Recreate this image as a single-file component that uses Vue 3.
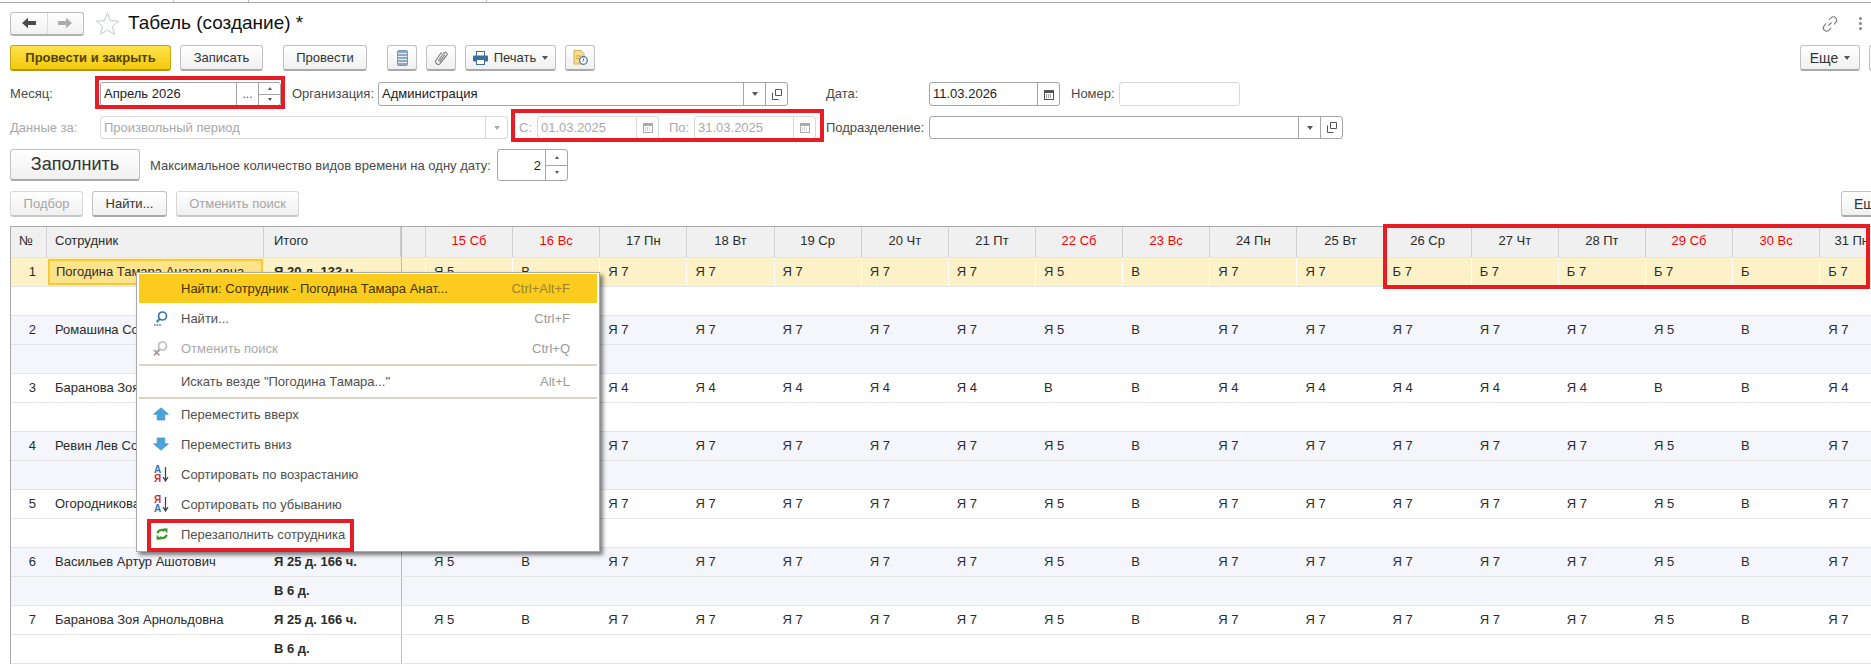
<script setup>
const days = ['15 Сб','16 Вс','17 Пн','18 Вт','19 Ср','20 Чт','21 Пт','22 Сб','23 Вс','24 Пн','25 Вт','26 Ср','27 Чт','28 Пт','29 Сб','30 Вс','31 Пн']
const std = ['Я 5','В','Я 7','Я 7','Я 7','Я 7','Я 7','Я 5','В','Я 7','Я 7','Я 7','Я 7','Я 7','Я 5','В','Я 7']
const hid = ['','',...std.slice(2)]
const rows = [
  {n:1,name:'Погодина Тамара Анатольевна',t1:'Я 20 д. 133 ч.',t2:'',cells:['Я 5','В','Я 7','Я 7','Я 7','Я 7','Я 7','Я 5','В','Я 7','Я 7','Б 7','Б 7','Б 7','Б 7','Б','Б 7']},
  {n:2,name:'Ромашина Со',t1:'',t2:'',cells:hid},
  {n:3,name:'Баранова Зоя',t1:'',t2:'',cells:['','','Я 4','Я 4','Я 4','Я 4','Я 4','В','В','Я 4','Я 4','Я 4','Я 4','Я 4','В','В','Я 4']},
  {n:4,name:'Ревин Лев Со',t1:'',t2:'',cells:hid},
  {n:5,name:'Огородникова',t1:'',t2:'',cells:hid},
  {n:6,name:'Васильев Артур Ашотович',t1:'Я 25 д. 166 ч.',t2:'В 6 д.',cells:std},
  {n:7,name:'Баранова Зоя Арнольдовна',t1:'Я 25 д. 166 ч.',t2:'В 6 д.',cells:std},
]
const isRed = d => /Сб|Вс/.test(d)
</script>

<template>
  <div class="page">
    <div class="topline"><i class="tick t1"></i><i class="tick t2"></i><i class="tick t3"></i></div>
    <div class="titlebar">
      <div class="nav">
        <span class="navb"><svg width="16" height="12" viewBox="0 0 16 12"><path d="M1 6 7 .8V4H15V8H7V11.2Z" fill="#4a4a4a"/></svg></span>
        <span class="navb"><svg width="16" height="12" viewBox="0 0 16 12"><path d="M15 6 9 .8V4H1V8H9V11.2Z" fill="#ababab"/></svg></span>
      </div>
      <svg class="star" width="25" height="25" viewBox="0 0 25 25"><path d="M12.5 2 15.5 9.6 23.6 10.2 17.4 15.4 19.4 23.3 12.5 19 5.6 23.3 7.6 15.4 1.4 10.2 9.5 9.6Z" fill="#fff" stroke="#c4c8cc"/></svg>
      <span class="title">Табель (создание) *</span>
      <svg class="link" width="18" height="18" viewBox="0 0 18 18" fill="none" stroke="#777" stroke-width="1.1"><path d="M7.5 10.5 10.5 7.5M8 5l2-2.2a3 3 0 0 1 4.6 0 3.2 3.2 0 0 1 .3 4.4L13 9.5M10 13l-2 2.2a3 3 0 0 1-4.6 0 3.2 3.2 0 0 1-.3-4.4L5 8.5"/></svg>
      <span class="dots"><i></i><i></i><i></i></span>
    </div>

    <div class="toolbar">
      <button class="btn primary w161">Провести и закрыть</button>
      <button class="btn w83">Записать</button>
      <button class="btn w84 ml11">Провести</button>
      <button class="btn ic ml11"><svg width="11" height="16" viewBox="0 0 11 16"><rect x=".5" y=".5" width="10" height="15" rx="1" fill="#8fa9c4" stroke="#7d98b5"/><path d="M1 3.5h9M1 6.5h9M1 9.5h9M1 12.5h9" stroke="#e6edf4"/></svg></button>
      <button class="btn ic"><svg width="14" height="14" viewBox="0 0 14 14" fill="none" stroke="#7c7c7c" stroke-width="1.1"><path d="M4.2 10 9.6 2.2a1.9 1.9 0 0 1 3.1 2.2L6.4 12.2A2.7 2.7 0 0 1 2 9L7.6 1.4M5.5 11l5.4-7.4"/></svg></button>
      <button class="btn w91">
        <svg width="15" height="14" viewBox="0 0 15 14"><rect x="3.5" y=".5" width="8" height="5" fill="#fff" stroke="#3f6f98"/><rect x="0" y="4.5" width="15" height="6" rx="1" fill="#3f6f98"/><rect x="3.5" y="8.5" width="8" height="5" fill="#fff" stroke="#3f6f98"/></svg>
        <span>Печать</span><i class="caret"></i>
      </button>
      <button class="btn ic"><svg width="15" height="15" viewBox="0 0 15 15"><path d="M1 .5h7l3 3V14H1Z" fill="#f5dc8e" stroke="#cfae55"/><path d="M3 6h5M3 8.5h4" stroke="#c9a348"/><circle cx="10.5" cy="10.5" r="3.8" fill="#fff" stroke="#3c6ea8" stroke-width="1.2"/><path d="M10.5 8.5v2l-1.2 1" stroke="#d33" fill="none"/></svg></button>
      <span class="spacer"></span>
      <button class="btn w60 eshe">Еще<i class="caret"></i></button>
      <button class="btn clipb"></button>
    </div>

    <div class="frow r1">
      <span class="lbl w90">Месяц:</span>
      <div class="field w181">
        <span class="val">Апрель 2026</span>
        <span class="cell w21 muted">...</span>
        <span class="spin"><i class="up"></i><i class="down"></i></span>
      </div>
      <span class="lbl w86 ml11">Организация:</span>
      <div class="field w410">
        <span class="val">Администрация</span>
        <span class="cell w21"><i class="caret"></i></span>
        <span class="cell w21"><svg width="10" height="11" viewBox="0 0 10 11" fill="none" stroke="#555"><path d="M3.5.5h6v6h-6zM.5 3.5v7h6"/></svg></span>
      </div>
      <span class="lbl w142 ml39">Дата:</span>
      <div class="field w131">
        <span class="val">11.03.2026</span>
        <span class="cell w21"><svg width="10" height="11" viewBox="0 0 10 11"><rect x=".5" y="1.5" width="9" height="9" fill="#fff" stroke="#555"/><rect x="1" y="1" width="8" height="3" fill="#555"/><path d="M2 6h6M2 8h6" stroke="#555" stroke-dasharray="1 1"/></svg></span>
      </div>
      <span class="lbl ml11 w48">Номер:</span>
      <div class="field w121 light"></div>
    </div>

    <div class="frow r2">
      <span class="lbl w90 dis">Данные за:</span>
      <div class="field w408 light">
        <span class="val dis">Произвольный период</span>
        <span class="cell w21 lightc"><i class="caret lightcaret"></i></span>
      </div>
      <span class="lbl dis ml11 w18">С:</span>
      <div class="field w122 light">
        <span class="val dis">01.03.2025</span>
        <span class="cell w21 lightc"><svg width="10" height="11" viewBox="0 0 10 11"><rect x=".5" y="1.5" width="9" height="9" fill="#fff" stroke="#aaa"/><rect x="1" y="1" width="8" height="3" fill="#aaa"/><path d="M2 6h6M2 8h6" stroke="#aaa" stroke-dasharray="1 1"/></svg></span>
      </div>
      <span class="lbl dis ml10 w25">По:</span>
      <div class="field w122 light">
        <span class="val dis">31.03.2025</span>
        <span class="cell w21 lightc"><svg width="10" height="11" viewBox="0 0 10 11"><rect x=".5" y="1.5" width="9" height="9" fill="#fff" stroke="#aaa"/><rect x="1" y="1" width="8" height="3" fill="#aaa"/><path d="M2 6h6M2 8h6" stroke="#aaa" stroke-dasharray="1 1"/></svg></span>
      </div>
      <span class="lbl ml10 w103">Подразделение:</span>
      <div class="field w414">
        <span class="val"></span>
        <span class="cell w21"><i class="caret"></i></span>
        <span class="cell w21"><svg width="10" height="11" viewBox="0 0 10 11" fill="none" stroke="#555"><path d="M3.5.5h6v6h-6zM.5 3.5v7h6"/></svg></span>
      </div>
    </div>

    <div class="frow r3">
      <button class="btn big">Заполнить</button>
      <span class="lbl ml10 w347">Максимальное количество видов времени на одну дату:</span>
      <div class="field w71">
        <span class="val right">2</span>
        <span class="spin"><i class="up"></i><i class="down"></i></span>
      </div>
    </div>

    <div class="frow r4">
      <button class="btn dbtn w73">Подбор</button>
      <button class="btn w75">Найти...</button>
      <button class="btn dbtn w123">Отменить поиск</button>
      <span class="spacer"></span>
      <button class="btn clipr">Еще</button>
    </div>

    <div class="tablewrap">
      <div class="thead">
        <div class="c cn">№</div>
        <div class="c cname">Сотрудник</div>
        <div class="c ctot">Итого</div>
        <div class="c cblank"></div>
        <div v-for="d in days" :key="d" class="c cday center" :class="{red:isRed(d)}">{{ d }}</div>
      </div>
      <div v-for="r in rows" :key="r.n" class="tr" :class="{sel:r.n===1, even:r.n%2===0}">
        <div class="line l1">
          <div class="c cn num">{{ r.n }}</div>
          <div class="c cname"><span class="nm" :class="{focus:r.n===1}">{{ r.name }}</span></div>
          <div class="c ctot b">{{ r.t1 }}</div>
          <div class="c cblank"></div>
          <div v-for="(v,i) in r.cells" :key="i" class="c cday">{{ v }}</div>
        </div>
        <div class="line l2">
          <div class="c cn"></div>
          <div class="c cname"></div>
          <div class="c ctot b">{{ r.t2 }}</div>
          <div class="c cblank"></div>
          <div class="c crest"></div>
        </div>
      </div>
    </div>

    <div class="menu">
      <div class="mi hi"><span class="mt">Найти: Сотрудник - Погодина Тамара Анат...</span><span class="ms">Ctrl+Alt+F</span></div>
      <div class="mi">
        <svg class="mic" width="16" height="16" viewBox="0 0 16 16" fill="none"><circle cx="9.5" cy="6" r="4" stroke="#3a7aa8" stroke-width="1.7"/><path d="M6.6 9 3.6 12" stroke="#3a7aa8" stroke-width="2"/><path d="M1 15h1.6M3.6 15h1.6M6.2 15h1.6" stroke="#3a7aa8" stroke-width="1.4"/></svg>
        <span class="mt">Найти...</span><span class="ms">Ctrl+F</span></div>
      <div class="mi dism">
        <svg class="mic" width="16" height="16" viewBox="0 0 16 16" fill="none"><circle cx="9.5" cy="6" r="4" stroke="#bdbdbd" stroke-width="1.7"/><path d="M6.6 9 3.6 12" stroke="#bdbdbd" stroke-width="2"/><path d="M1 10l5.4 5.4M6.4 10 1 15.4" stroke="#b48f8f" stroke-width="1.7"/></svg>
        <span class="mt">Отменить поиск</span><span class="ms">Ctrl+Q</span></div>
      <div class="sep"></div>
      <div class="mi"><span class="mt">Искать везде "Погодина Тамара..."</span><span class="ms">Alt+L</span></div>
      <div class="sep"></div>
      <div class="mi">
        <svg class="mic" width="16" height="14" viewBox="0 0 16 14"><path d="M8 .8 15.4 7.2H11.8V13H4.2V7.2H.6Z" fill="#4aa3dc" stroke="#3a90c8" stroke-width=".7" stroke-linejoin="round"/></svg>
        <span class="mt">Переместить вверх</span></div>
      <div class="mi">
        <svg class="mic" width="16" height="14" viewBox="0 0 16 14"><path d="M8 13.2 15.4 6.8H11.8V1H4.2V6.8H.6Z" fill="#4aa3dc" stroke="#3a90c8" stroke-width=".7" stroke-linejoin="round"/></svg>
        <span class="mt">Переместить вниз</span></div>
      <div class="mi">
        <span class="mic sorti"><span class="az"><em class="blue">А</em><em class="redt">Я</em></span><svg width="7" height="15" viewBox="0 0 7 15"><path d="M3.5 0V13M1 10 3.5 14 6 10" stroke="#444" stroke-width="1.3" fill="none"/></svg></span>
        <span class="mt">Сортировать по возрастанию</span></div>
      <div class="mi">
        <span class="mic sorti"><span class="az"><em class="redt">Я</em><em class="blue">А</em></span><svg width="7" height="15" viewBox="0 0 7 15"><path d="M3.5 0V13M1 10 3.5 14 6 10" stroke="#444" stroke-width="1.3" fill="none"/></svg></span>
        <span class="mt">Сортировать по убыванию</span></div>
      <div class="mi">
        <svg class="mic refill" width="12" height="12" viewBox="0 0 12 12" fill="none" stroke="#3c9a2a" stroke-width="2.4"><path d="M1.4 5.2A4.4 4.4 0 0 1 8.6 3"/><path d="M10.6 6.8A4.4 4.4 0 0 1 3.4 9"/><path d="M7 .2 11.6 .6 11.2 5.4Z" fill="#3c9a2a" stroke="none"/><path d="M5 11.8 .4 11.4 .8 6.6Z" fill="#3c9a2a" stroke="none"/></svg>
        <span class="mt">Перезаполнить сотрудника</span></div>
    </div>

    <div class="rbox b1"></div>
    <div class="rbox b2"></div>
    <div class="rbox b3"></div>
    <div class="rbox b4"></div>
  </div>
</template>

<style>
html,body{margin:0;background:#fff;overflow:hidden}
</style>
<style scoped>
.page{position:relative;width:1871px;height:666px;overflow:hidden;background:#fff;font:13px "Liberation Sans",Arial,sans-serif;color:#2b2b2b}
.topline{position:relative;height:3px;box-sizing:border-box;border-bottom:1px solid #a8a8a8}
.tick{position:absolute;top:0;width:1px;height:2px;background:#bbb}
.t1{left:173px}.t2{left:248px}.t3{left:486px}
.titlebar{display:flex;align-items:center;height:23px;padding:9px 0 0 10px}
.nav{display:flex;flex:none;width:74px;height:24px;box-sizing:border-box;border:1px solid #bcbcbc;border-bottom:2px solid #b0b0b0;border-radius:3px;background:linear-gradient(#fff,#f1f1f1)}
.navb{flex:1;display:flex;align-items:center;justify-content:center}
.navb+.navb{border-left:1px solid #ddd}
.star{margin-left:11px}
.title{margin-left:8px;font-size:19px;color:#111;padding-bottom:2px}
.link{margin-left:auto;margin-right:20px}
.dots{display:flex;flex-direction:column;gap:2px;margin-right:9px}
.dots i{width:3px;height:3px;background:#888;border-radius:50%}
.toolbar{display:flex;align-items:center;gap:9px;margin-top:10px;height:26px;padding-left:10px}
.btn{box-sizing:border-box;height:26px;padding:0;border:1px solid #c2c2c2;border-bottom:2px solid #a9a9a9;border-radius:3px;background:linear-gradient(#fff,#f0f0f0);font:13px "Liberation Sans",Arial,sans-serif;color:#333;display:inline-flex;align-items:center;justify-content:center;gap:6px;flex:none}
.primary{background:linear-gradient(#ffe34d,#f4c90a);border-color:#c7a80f;border-bottom-color:#b4960c;font-weight:700;color:#4f4300}
.w161{width:161px}.w83{width:83px}.w84{width:84px}.w91{width:91px}.w60{width:60px}
.w73{width:73px}.w75{width:75px}.w123{width:123px}
.ic{width:30px}
.ml11{margin-left:11px}
.spacer{flex:1}
.eshe{font-size:14px}
.clipb{width:20px;margin-right:-18px}
.caret{display:inline-block;width:0;height:0;border:3px solid transparent;border-top:4px solid #555;border-bottom:0}
.lightcaret{border-top-color:#aaa}
.frow{display:flex;align-items:center;padding-left:10px}
.r1{margin-top:11px;height:24px}
.r1 .lbl{padding-bottom:2px}
.r2{margin-top:10px;height:23px}
.r3{margin-top:10px;height:32px}
.r4{margin-top:10px;height:26px;gap:9px}
.lbl{flex:none;color:#4a4a4a;white-space:nowrap}
.dis{color:#a9a9a9}
.w90{width:90px}.w86{width:86px}.w142{width:103px}.w48{width:48px}.w18{width:18px}.w25{width:25px}.w103{width:103px}.w347{width:347px}
.ml39{margin-left:38px}.ml10{margin-left:10px}
.field{display:flex;flex:none;box-sizing:border-box;height:100%;border:1px solid #a5a5a5;border-radius:3px;background:#fff;align-items:stretch;color:#222}
.light{border-color:#d8d8d8}
.w181{width:181px}.w410{width:410px}.w131{width:131px}.w121{width:121px}.w408{width:408px}.w122{width:122px}.w414{width:414px}.w71{width:71px}
.val{flex:1;padding-left:3px;display:flex;align-items:center;white-space:nowrap;min-width:0}
.r1 .val{padding-bottom:1px}
.val.right{justify-content:flex-end;padding-right:4px}
.cell{flex:none;width:21px;border-left:1px solid #a5a5a5;display:flex;align-items:center;justify-content:center}
.lightc{border-left-color:#d8d8d8}
.muted{color:#555;font-size:12px}
.spin{flex:none;width:21px;border-left:1px solid #a5a5a5;display:flex;flex-direction:column}
.spin i{flex:1;display:flex;align-items:center;justify-content:center}
.spin .down{border-top:1px solid #a5a5a5}
.spin i::after{content:"";width:0;height:0;border:2px solid transparent}
.spin .up::after{border-bottom:3px solid #555;border-top:0}
.spin .down::after{border-top:3px solid #555;border-bottom:0}
.big{width:130px;height:32px;font-size:18px}
.dbtn{color:#a5a5a5;border-color:#d8d8d8;border-bottom-color:#c8c8c8}
.clipr{width:60px;margin-right:-30px;justify-content:flex-start;padding-left:12px;font-size:14px}
.tablewrap{margin:9px 0 0 10px;width:1900px;border-left:1px solid #aaa;border-top:1px solid #aaa}
.thead{display:flex;height:30px;background:#f0f0f0;border-bottom:1px solid #e4e4e4}
.thead .c{border-right:1px solid #cfcfcf;display:flex;align-items:center;padding-bottom:3px}
.thead .c:last-child{width:64px}
.c{flex:none;box-sizing:border-box;padding-left:8px;white-space:nowrap;overflow:hidden}
.center{justify-content:center;padding-left:0}
.cn{width:36px}
.cname{width:217px}
.ctot{width:137px;padding-left:10px}
.cblank{width:25px;padding:0;border-left:1px solid #bdbdbd}
.cday{width:87.15px}
.crest{flex:1}
.red{color:#f00}
.line{display:flex;height:29px;box-sizing:border-box;border-bottom:1px solid #e5e5e5}
.line .c{height:100%;display:flex;align-items:center;padding-bottom:2px}
.num{justify-content:flex-end;padding:0 11px 2px 0}
.b{font-weight:700}
.even{background:#f4f6fb}
.sel .l1{background:#fdf1c7}
.sel .l1 .cday,.sel .l1 .cblank{border-right:1px solid #fff}
.nm{display:flex;align-items:center;width:100%}
.line .cname:has(.focus){padding:1px 0 1px 1px}
.focus{height:100%;box-sizing:border-box;border:2px solid #f7ca2f;background:#fde38c;padding:0 0 2px 6px;margin-right:1px}
.menu{position:absolute;left:136px;top:272px;width:464px;height:280px;box-sizing:border-box;background:#fff;border:1px solid #a9a9a9;padding:1px 2px;box-shadow:3px 3px 4px rgba(0,0,0,.5)}
.mi{position:relative;height:30px;display:flex;align-items:center;padding-left:42px;color:#4f4f4f}
.mi.hi{height:29px;background:#fbcb1e;color:#403400}
.mt{flex:1;white-space:nowrap}
.ms{color:#9b9b9b;margin-right:27px;white-space:nowrap}
.hi .ms{color:#9c8430}
.dism{color:#a9a9a9}
.mic{position:absolute;left:14px;top:50%;transform:translateY(-50%)}
.refill{left:17px}
.sep{height:2px;margin-top:1px;background:#d9d4c3}
.sorti{display:flex;align-items:center;gap:1px;left:15px}
.az{display:flex;flex-direction:column;font-size:10px;line-height:9px;font-weight:700}
.az em{font-style:normal}
.blue{color:#2e78b7}.redt{color:#c0343b}
.rbox{position:absolute;box-sizing:border-box;border:4px solid #e81c24;pointer-events:none}
.b1{left:95px;top:76px;width:190px;height:33px}
.b2{left:511px;top:109px;width:313px;height:33px}
.b3{left:1383px;top:224px;width:487px;height:65px}
.b4{left:147px;top:519px;width:207px;height:33px}
</style>
